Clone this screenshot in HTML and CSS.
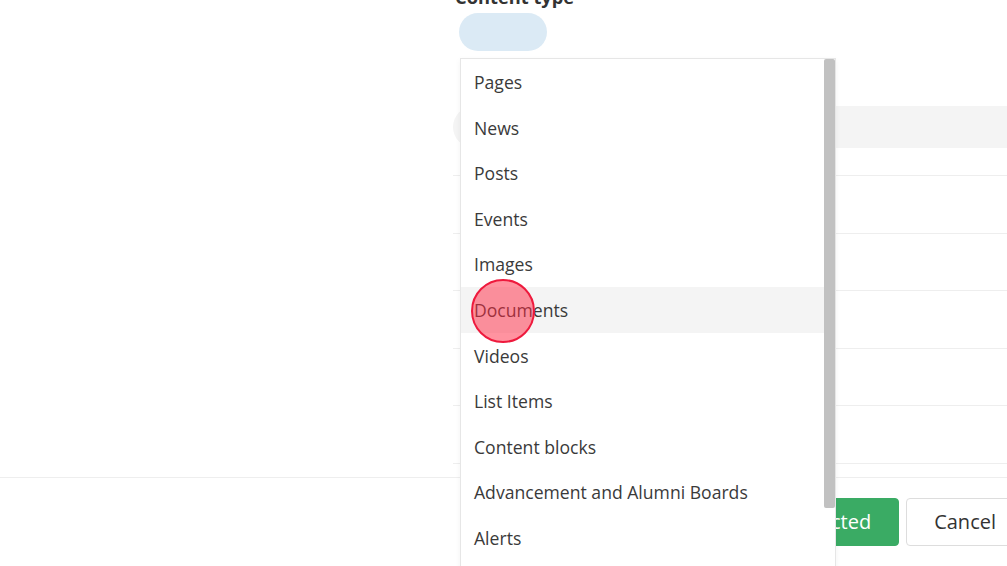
FILE: index.html
```html
<!DOCTYPE html>
<html>
<head>
<meta charset="utf-8">
<link rel="stylesheet" href="styles.css">
</head>
<body>
<div class="page">
  <div class="main">
    <h3 class="label">Content type</h3>
    <div class="pill"></div>
    <div class="search"></div>
    <div class="rows">
      <div class="row"></div>
      <div class="row"></div>
      <div class="row"></div>
      <div class="row"></div>
      <div class="row"></div>
    </div>
  </div>
  <div class="footer">
    <div class="actions">
      <button class="btn btn-primary">Add selected</button>
      <button class="btn btn-cancel">Cancel</button>
    </div>
  </div>
</div>

<div class="dropdown">
  <ul class="options">
    <li class="option">Pages</li>
    <li class="option">News</li>
    <li class="option">Posts</li>
    <li class="option">Events</li>
    <li class="option">Images</li>
    <li class="option active">Documents</li>
    <li class="option">Videos</li>
    <li class="option">List Items</li>
    <li class="option">Content blocks</li>
    <li class="option">Advancement and Alumni Boards</li>
    <li class="option">Alerts</li>
  </ul>
  <div class="scrolltrack"><div class="thumb"></div></div>
</div>

<div class="click-marker"></div>
</body>
</html>
```

FILE: styles.css
```css
html, body {
  margin: 0;
  padding: 0;
  width: 1007px;
  height: 566px;
  overflow: hidden;
  background: #ffffff;
  font-family: "Open Sans", "Liberation Sans", sans-serif;
  color: #333333;
}

.page {
  display: flex;
  flex-direction: column;
  width: 1007px;
}

.main {
  padding-left: 453px;
  display: flex;
  flex-direction: column;
}

.label {
  margin: -14px 0 0 2px;
  font-size: 18.3px;
  line-height: 22px;
  font-weight: 700;
  color: #333;
}

.pill {
  margin: 5px 0 0 6px;
  width: 88px;
  height: 38px;
  border-radius: 19px;
  background: #dbeaf5;
}

.search {
  margin-top: 55px;
  height: 42px;
  border-radius: 21px 0 0 21px;
  background: #f4f4f4;
}

.rows {
  margin-top: 27px;
  border-top: 1px solid #eeeeee;
}

.row {
  height: 56.5px;
  border-bottom: 1px solid #eeeeee;
}

.footer {
  margin-top: 13px;
  border-top: 1px solid #eeeeee;
  padding-top: 20px;
  display: flex;
  justify-content: flex-end;
}

.actions {
  display: flex;
  gap: 7px;
  margin-right: -17px;
}

.btn {
  height: 48px;
  border-radius: 4px;
  font-family: "Open Sans", "Liberation Sans", sans-serif;
  font-size: 20px;
  padding: 0 27px;
  cursor: pointer;
}

.btn-primary {
  background: #3aab64;
  color: #ffffff;
  border: 1px solid #3aab64;
}

.btn-cancel {
  background: #ffffff;
  color: #333333;
  border: 1px solid #dddddd;
}

.dropdown {
  position: absolute;
  left: 460px;
  top: 58px;
  width: 374px;
  height: 520px;
  background: #ffffff;
  border: 1px solid #e6e6e6;
  box-shadow: 0 2px 6px rgba(0, 0, 0, 0.05);
  display: flex;
}

.options {
  list-style: none;
  margin: 0;
  padding: 0;
  flex: 1;
}

.option {
  height: 45.6px;
  line-height: 47px;
  padding-left: 13px;
  font-size: 17.6px;
  color: #3a3a3a;
  white-space: nowrap;
}

.option.active {
  background: #f4f4f4;
}

.scrolltrack {
  width: 11px;
  background: #ffffff;
}

.thumb {
  width: 11px;
  height: 449px;
  background: #c1c1c1;
  border-radius: 2px;
}

.click-marker {
  position: absolute;
  left: 471px;
  top: 279px;
  width: 60px;
  height: 60px;
  border-radius: 50%;
  border: 2px solid #ee1a3d;
  background: rgba(255, 40, 65, 0.5);
}
```
